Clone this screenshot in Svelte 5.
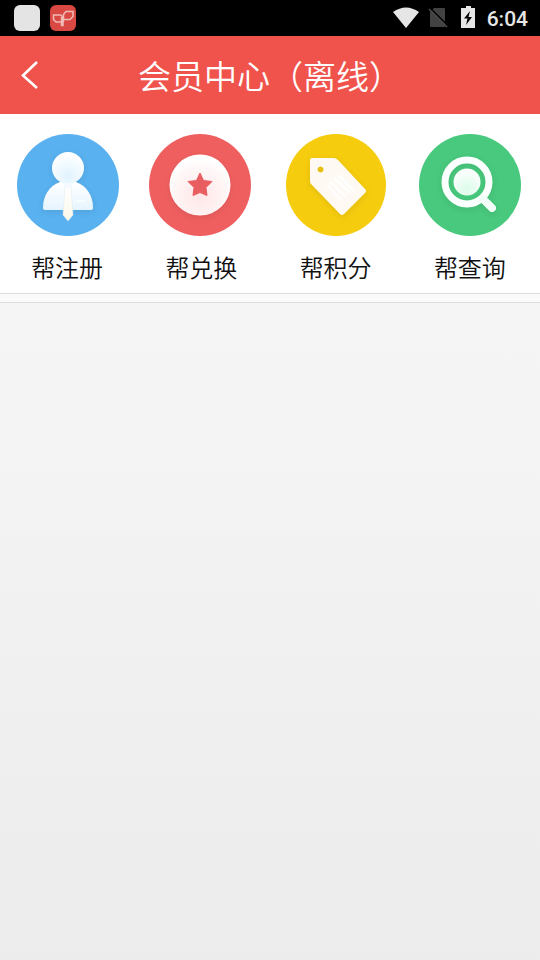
<script lang="ts">
  const items: { id: string; label: string }[] = [
    { id: 'register', label: '帮注册' },
    { id: 'exchange', label: '帮兑换' },
    { id: 'points', label: '帮积分' },
    { id: 'query', label: '帮查询' },
  ];
</script>

<div class="page">
  <div class="status">
    <div class="apps">
      <span class="app"></span>
      <svg class="app red" viewBox="0 0 26 26" fill="none" stroke="#f0bab6" stroke-width="1.500">
        <path d="M11 10H3.500V14.500L6 17H11M11 10L13 12.500V20.500H11.500V12" />
        <path d="M13.500 17V9.500L16 6.500H23V11.500L20 14.500H14" />
      </svg>
    </div>
    <div class="system">
      <svg class="wifi" viewBox="0 0 26 21">
        <path d="M0 5Q13-4 26 5L13 21Z" fill="#e6e6e6" />
      </svg>
      <svg class="sim" viewBox="0 0 20 21">
        <path d="M6 1H16a1 1 0 0 1 1 1V19a1 1 0 0 1-1 1H3a1 1 0 0 1-1-1V5Z" fill="#424242" />
        <path d="M2 1L20 19" stroke="#000" stroke-width="1.600" />
        <path d="M1 2L19 20" stroke="#4a4a4a" stroke-width="1.600" />
      </svg>
      <svg class="battery" viewBox="0 0 14 22">
        <path d="M5 0h5v2h4v20H0V2h5Z" fill="#e6e6e6" />
        <path d="M9 5L3 12.500H6.500L5 19L11 11H7.500Z" fill="#000" />
      </svg>
      <time>6:04</time>
    </div>
  </div>

  <header>
    <button class="back" aria-label="返回">
      <svg viewBox="0 0 18 28" fill="none" stroke="#fff" stroke-width="2.600">
        <path d="M16 1L2 14.500L16 27" />
      </svg>
    </button>
    <h1>会员中心（离线）</h1>
  </header>

  <nav>
    {#each items as item}
      <button class="item">
        <svg class="icon" viewBox="0 0 104 104" aria-hidden="true">
          {#if item.id === 'register'}
            <defs>
              <radialGradient id="head" cx=".5" cy=".75" r=".7">
                <stop offset="0" stop-color="#e0f3ff" />
                <stop offset="1" stop-color="#fff" />
              </radialGradient>
              <linearGradient id="shirt" x2="0" y2="1">
                <stop offset="0" stop-color="#fff" />
                <stop offset="1" stop-color="#e6f4fe" />
              </linearGradient>
              <linearGradient id="tie" x2="0" y2="1">
                <stop offset="0" stop-color="#fff" />
                <stop offset="1" stop-color="#fbf8e8" />
              </linearGradient>
            </defs>
            <circle cx="53" cy="52" r="51" fill="#59b1ef" />
            <g class="shadow">
              <path d="M45 49H61C72 53 78 63 78 75Q78 77 76 77H30Q28 77 28 75C28 63 34 53 45 49Z" fill="url(#shirt)" />
              <ellipse cx="53" cy="35" rx="16" ry="16" fill="url(#head)" />
              <path d="M62 68h9" stroke="#f7fcff" stroke-width="2" />
            </g>
            <path d="M50 53L48 82L53 88L58 82L56 53Z" fill="url(#tie)" stroke="#dceaf0" stroke-width=".5" />
            <path d="M48 50H58L56 55H50Z" fill="#f4faff" />
          {:else if item.id === 'exchange'}
            <defs>
              <radialGradient id="coin" cx=".5" cy=".68" r=".6">
                <stop offset="0" stop-color="#ffe6e7" />
                <stop offset=".8" stop-color="#fff8f8" />
                <stop offset="1" stop-color="#fff" />
              </radialGradient>
            </defs>
            <circle cx="51" cy="52" r="51" fill="#ef5f60" />
            <circle class="shadow" cx="51" cy="52" r="30.500" fill="url(#coin)" />
            <path
              d="M51 40L54.500 47.500L63 48.500L57 54.500L58 62.500L51 59.500L44 62.500L45 54.500L39 48.500L47.500 47.500Z"
              fill="#e85d60"
              stroke="#e85d60"
              stroke-linejoin="round"
            />
          {:else if item.id === 'points'}
            <ellipse cx="52" cy="52" rx="50" ry="51" fill="#f5cc0e" />
            <g class="shadow">
              <path
                fill="#fff9f3"
                fill-rule="evenodd"
                d="M28 25H50Q52 25 54 27L81 56Q83 58 81 60L60 81Q58 83 56 81L27 51Q26 50 26 48V27Q26 25 28 25ZM36.500 33.500a3 3 0 1 0 .1 0Z"
              />
            </g>
            <path d="M54 42L70 58M50 45L66 60M46 49L62 64M43 52L58 68" stroke="#fff" stroke-width="2.500" />
          {:else}
            <defs>
              <radialGradient id="lens" cx=".5" cy=".75" r=".65">
                <stop offset="0" stop-color="#dcfbe9" />
                <stop offset="1" stop-color="#fbfffd" />
              </radialGradient>
            </defs>
            <circle cx="52" cy="52" r="51" fill="#48c97d" />
            <g class="shadow">
              <circle cx="49" cy="49" r="22" fill="none" stroke="#fbfffd" stroke-width="7" />
              <path d="M65 66L74 75" stroke="#f3fdf7" stroke-width="8" stroke-linecap="round" />
            </g>
            <circle cx="49" cy="49" r="13.500" fill="url(#lens)" />
          {/if}
        </svg>
        <span>{item.label}</span>
      </button>
    {/each}
  </nav>

  <div class="divider"></div>
</div>

<style>
  :global(body) {
    margin: 0;
  }

  .page {
    min-height: 100vh;
    background: linear-gradient(#fafafa, #ececec);
    font-family: 'Noto Sans CJK SC', 'Noto Sans', sans-serif;
    font-weight: 350;
  }

  .status {
    display: flex;
    align-items: center;
    justify-content: space-between;
    height: 36px;
    padding: 0 12px 0 14px;
    background: #000;
  }

  .apps {
    display: flex;
    gap: 10px;
  }

  .app {
    width: 26px;
    height: 26px;
    border-radius: 6px;
    background: #e4e4e4;
  }

  .app.red {
    background: #d94842;
  }

  .system {
    display: flex;
    align-items: center;
    padding-bottom: 2px;
  }

  .wifi {
    width: 26px;
    height: 21px;
    margin-right: 9px;
  }

  .sim {
    width: 20px;
    height: 21px;
    margin-right: 13px;
  }

  .battery {
    width: 14px;
    height: 22px;
    margin-right: 12px;
  }

  time {
    padding-top: 4px;
    color: #e6e6e6;
    font: 500 21px/36px Roboto, sans-serif;
  }

  header {
    display: grid;
    grid-template-columns: 60px 1fr 60px;
    align-items: center;
    height: 78px;
    background: #f0534c;
  }

  button {
    padding: 0;
    border: 0;
    background: none;
    font-family: inherit;
    font-weight: inherit;
    cursor: pointer;
  }

  .back {
    display: flex;
    align-items: center;
    height: 78px;
    padding-left: 21px;
  }

  .back svg {
    width: 18px;
    height: 28px;
  }

  h1 {
    margin: 0;
    color: #fff;
    font-size: 33px;
    font-weight: inherit;
    line-height: 48px;
    text-align: center;
    white-space: nowrap;
  }

  nav {
    display: grid;
    grid-template-columns: repeat(4, 1fr);
    padding: 19px 3px 8px 0;
    background: #fff;
  }

  .item {
    display: flex;
    flex-direction: column;
    align-items: center;
    gap: 12px;
    color: #111;
    font-size: 24px;
    line-height: 36px;
  }

  .icon {
    width: 104px;
    height: 104px;
  }

  .shadow {
    filter: drop-shadow(0 2px 3px rgba(0, 0, 0, 0.08));
  }

  .divider {
    height: 8px;
    border-top: 1px solid #dcdcdc;
    border-bottom: 1px solid #dcdcdc;
    background: #fafafa;
  }
</style>
